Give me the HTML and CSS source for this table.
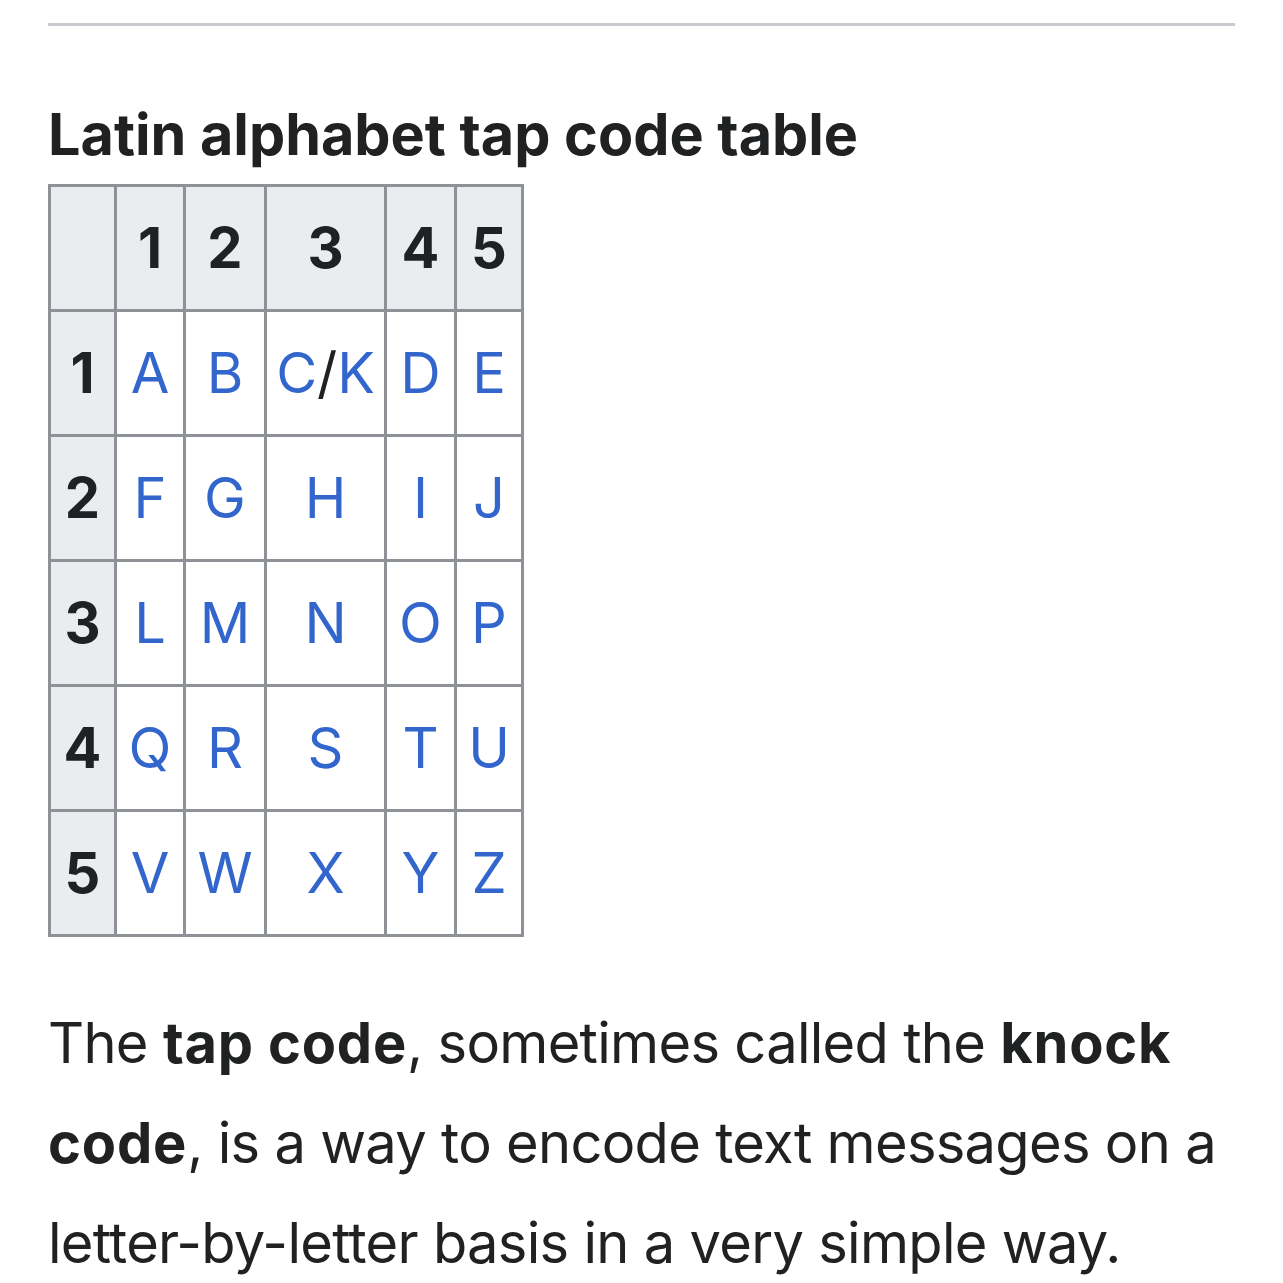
FILE: index.html
```html
<!DOCTYPE html>
<html lang="en">
<head>
<meta charset="utf-8">
<title>Tap code</title>
<link rel="stylesheet" href="styles.css">
</head>
<body>
<div class="page">
  <hr class="rule">
  <h2 class="caption">Latin alphabet tap code table</h2>
  <table class="tap">
    <colgroup>
      <col class="c0"><col class="c1"><col class="c2"><col class="c3"><col class="c4"><col class="c5">
    </colgroup>
    <tr><th></th><th>1</th><th>2</th><th>3</th><th>4</th><th>5</th></tr>
    <tr><th>1</th><td><a>A</a></td><td><a>B</a></td><td><a>C</a>/<a>K</a></td><td><a>D</a></td><td><a>E</a></td></tr>
    <tr><th>2</th><td><a>F</a></td><td><a>G</a></td><td><a>H</a></td><td><a>I</a></td><td><a>J</a></td></tr>
    <tr><th>3</th><td><a>L</a></td><td><a>M</a></td><td><a>N</a></td><td><a>O</a></td><td><a>P</a></td></tr>
    <tr><th>4</th><td><a>Q</a></td><td><a>R</a></td><td><a>S</a></td><td><a>T</a></td><td><a>U</a></td></tr>
    <tr><th>5</th><td><a>V</a></td><td><a>W</a></td><td><a>X</a></td><td><a>Y</a></td><td><a>Z</a></td></tr>
  </table>
  <p class="lead">The <b>tap code</b>, sometimes called the <b>knock code</b>, is a way to encode text messages on a letter-by-letter basis in a very simple way.</p>
</div>
</body>
</html>
```

FILE: styles.css
```css
html, body {
  margin: 0;
  padding: 0;
  background: #ffffff;
}
body {
  font-family: Inter, "Noto Sans", sans-serif;
  color: #202122;
}
.page {
  padding: 23px 48px 0 48px;
}
.rule {
  margin: 0;
  border: 0;
  height: 3px;
  background: #c8ccd1;
}
.caption {
  margin: 72px 0 14px 0;
  font-size: 57.5px;
  line-height: 72px;
  font-weight: 700;
  letter-spacing: 0;
}
.tap {
  border-collapse: collapse;
  table-layout: fixed;
  width: 474px;
  font-size: 56px;
  border: 3px solid #b0b4ba;
}
.c0 { width: 66px; }
.c1 { width: 69px; }
.c2 { width: 81px; }
.c3 { width: 120px; }
.c4 { width: 70px; }
.c5 { width: 67px; }
.tap th, .tap td {
  border: 3px solid #8e9196;
  padding: 0;
  height: 122px;
  text-align: center;
  vertical-align: middle;
  white-space: nowrap;
}
.tap th {
  background: #eaecf0;
  font-weight: 700;
}
.tap td {
  background: #ffffff;
  font-weight: 400;
}
.tap a {
  color: #3366cc;
}
.lead {
  margin: 56px 0 0 0;
  font-size: 56px;
  line-height: 100px;
  letter-spacing: -0.7px;
}
.lead b {
  font-weight: 700;
  letter-spacing: 0.8px;
}
```
